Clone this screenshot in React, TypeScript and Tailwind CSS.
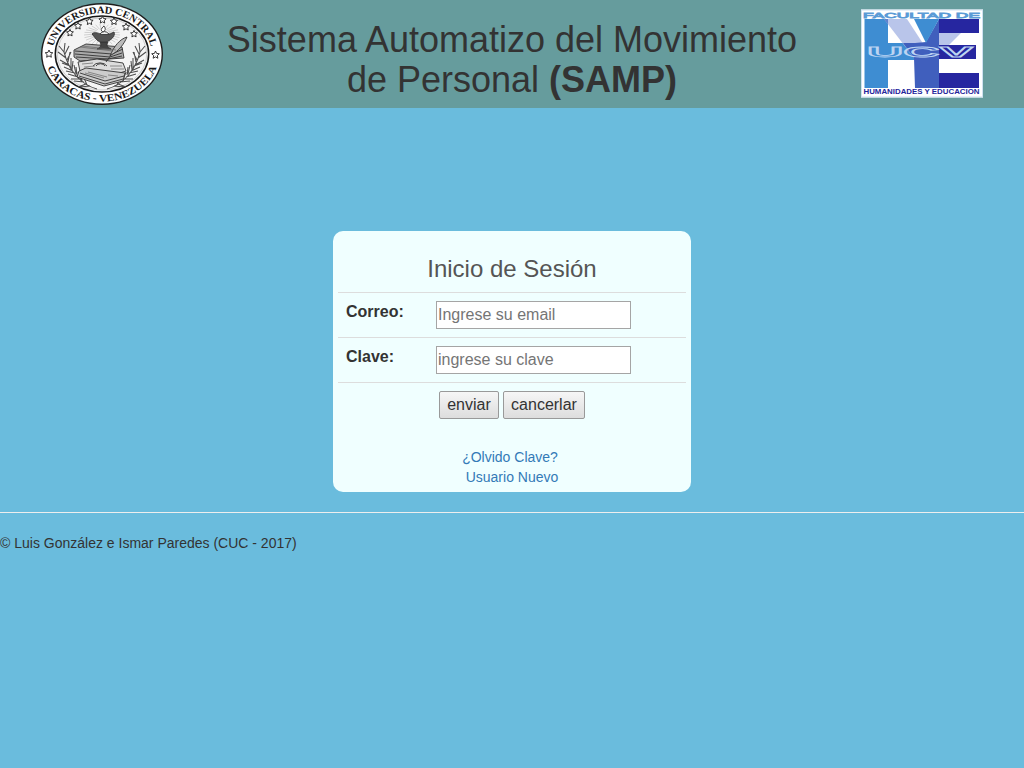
import React from "react";

const STARS = [
  [-53, 0, 4], [53.5, 1, 4], [-32, -21, 3.6], [-24, -28, 3.8], [-12.5, -32.5, 3.8],
  [0.5, -34, 3.8], [12, -32.5, 3.8], [24, -27, 3.8], [32, -20, 3.6],
];

function star(cx: number, cy: number, r: number) {
  return Array.from({ length: 10 }, (_, i) => {
    const a = (Math.PI * i) / 5 - Math.PI / 2;
    const q = i % 2 ? r * 0.48 : r;
    return `${(cx + q * Math.cos(a)).toFixed(2)},${(cy + q * Math.sin(a)).toFixed(2)}`;
  }).join(" ");
}

const BRANCH =
  "M-5 35C-20 31 -33 18 -38 -2M-12 32l-10 1M-15 31l-3-7M-18 28l-10-1M-21 26l-3-8M-24 23l-10-3M-26 20l-2-9M-29 17l-9-4M-31 14l0-10M-33 11l-9-5M-34 8l2-10M-36 4l-8-6M-37 0l4-8M-38-2l-5-6M-38-2l1-9M-16 30l-8 3M-22 25l-9 0M-27 19l-9-2M-32 12l-8-3M-20 27l-1-8M-25 21l-1-8M-30 16l1-9M-35 6l4-8";

function Seal() {
  return (
    <svg className="block h-[104px] w-[124px]" viewBox="-62 -52 124 104" role="img" aria-label="Universidad Central">
      <ellipse rx="61" ry="51" fill="#1c1c1c" />
      <ellipse rx="59.6" ry="49.6" fill="#fff" />
      <ellipse rx="46.7" ry="38" fill="#f4f4f4" stroke="#161616" strokeWidth="1.5" />
      <ellipse rx="44.7" ry="36" fill="none" stroke="#999" strokeWidth="0.4" />
      <defs>
        <path id="seal-top" d="M-49.5 0A49.5 40.8 0 0 1 49.5 0" />
        <path id="seal-bottom" d="M-57 0A57 47.6 0 0 0 57 0" />
      </defs>
      <g fill="#171717" fontFamily="'Liberation Serif', serif" fontWeight="700" fontSize="10.2" textAnchor="middle">
        <text><textPath href="#seal-top" startOffset="50%" textLength="127" lengthAdjust="spacingAndGlyphs">UNIVERSIDAD CENTRAL</textPath></text>
        <text><textPath href="#seal-bottom" startOffset="50%" textLength="137" lengthAdjust="spacingAndGlyphs">CARACAS - VENEZUELA</textPath></text>
      </g>
      <g fill="#fff" stroke="#222" strokeWidth="0.9">
        {STARS.map(([x, y, r]) => <polygon key={x} points={star(x, y, r)} />)}
      </g>
      <g stroke="#aaa" strokeWidth="0.5">
        {Array.from({ length: 26 }, (_, i) => {
          const a = (Math.PI * 2 * i) / 26;
          return <line key={i} x1={7 * Math.cos(a)} y1={-20 + 5 * Math.sin(a)} x2={18 * Math.cos(a)} y2={-19 + 11 * Math.sin(a)} />;
        })}
      </g>
      <g fill="none" stroke="#4d4d4d" strokeWidth="1.05">
        <path d={BRANCH} />
        <path d={BRANCH} transform="scale(-1 1)" />
      </g>
      <g stroke="#333" strokeWidth="0.9" strokeLinejoin="round">
        <path d="M-28-4L-16-10L20-7L22 4L-22 7L-28 3Z" fill="#aaa" />
        <path d="M-27-3L10 0L21-5M-27 0L8 3L20-1M-26 3L6 5L20 2" fill="none" />
        <path d="M-24 8L-5 5L21 9L24 17L8 22L-22 17Z" fill="#ddd" />
        <path d="M-23 17L-16 14L23 19L21 27L2 32L-25 23Z" fill="#ccc" />
        <path d="M-22 19L3 27L22 22M-23 22L3 30L21 25M-9 12a8 6 0 0 1 14 0M-6 12a5 4 0 0 1 9 0" fill="none" />
        <path d="M-5-5C0-7-1-10-2-12L6-12C4-9 5-7 9-5Z" fill="#444" />
        <path d="M-10-20C-7-23-3-20 0-20H8L12-22C14-18 8-13 4-12H-1C-6-13-7-17-10-20Z" fill="#555" />
        <path d="M-2-20Q2-25 7-20" fill="#eee" />
        <path d="M2-28Q-3-24 1-22Q5-24 2-28" fill="#fff" />
        <path d="M8 2C12-8 18-15 25-17C22-10 17-3 9 1L4 8" fill="#bbb" />
      </g>
      <path d="M-22-7L11-3M-20-8L14-4M-20 10L-9 9M-18 13L-7 12M8 12L20 12M9 15L22 15M-17 19L2 24M-14 18L5 23M6 21L16 22" fill="none" stroke="#666" strokeWidth="0.7" />
    </svg>
  );
}

function FacultyLogo() {
  return (
    <svg className="block h-[90px] w-[122px]" viewBox="861 9 122 90" role="img" aria-label="Facultad de Humanidades y Educación">
      <rect x="861" y="9.5" width="122" height="88" fill="#fff" />
      <rect x="861.5" y="10" width="121" height="87" fill="none" stroke="#cfe1f1" />
      <path d="M864.5 19H888V43H915V88H888V60H888V88H864.5Z" fill="#3e8dd2" />
      <path d="M888 60H915V88H888Z" fill="#fff" />
      <path d="M888 43H915V60H888Z" fill="#3e8dd2" />
      <path d="M884 19H907L922 42L914 58Z" fill="#b9c5ea" />
      <path d="M884 19H888V24.5Z" fill="#5c83ce" />
      <path d="M939 19H979V33H939ZM939 45H976V59H939ZM939 73H979V88H939Z" fill="#2626a0" />
      <path d="M939 33H961L949 45H939Z" fill="#b9c5ea" />
      <path d="M915 43L903 43L914 58L915 88H939V19L926 42Z" fill="#405fbd" />
      <path d="M914 19H939L926 43Z" fill="#3e8dd2" />
      <g fontFamily="'Liberation Sans', sans-serif">
        <text x="863" y="18.3" fontSize="8.1" textLength="117" lengthAdjust="spacingAndGlyphs" fill="#fff" stroke="#5b9bd6" strokeWidth="0.8">FACULTAD DE</text>
        <text x="867" y="56.5" fontSize="14" fontWeight="700" textLength="106" lengthAdjust="spacingAndGlyphs" fill="none" stroke="#bcd4f2" strokeWidth="0.8">UCV</text>
        <text x="863.5" y="94.3" fontSize="7.2" fontWeight="700" textLength="116" lengthAdjust="spacingAndGlyphs" fill="#24249b">HUMANIDADES Y EDUCACION</text>
      </g>
    </svg>
  );
}

function Field({ label, type, placeholder }: { label: string; type: string; placeholder: string }) {
  return (
    <div className="flex h-[45px] border-t border-[#ddd] p-2 text-base">
      <label className="w-[90px] leading-[22px] font-bold">{label}</label>
      <input
        type={type}
        placeholder={placeholder}
        className="h-7 w-[195px] border border-[#a5a5a5] bg-white px-px placeholder:text-[#757575]"
      />
    </div>
  );
}

const BUTTON = "h-7 rounded-[2px] border border-[#999] bg-linear-to-b from-[#f6f6f6] to-[#dddddd] text-base leading-[26px]";

export default function App() {
  return (
    <div className="min-h-screen bg-[#6abcdd] font-['Liberation_Sans',sans-serif] text-sm leading-5 text-[#333]">
      <header className="flex h-[108px] bg-[#669c9d]">
        <div className="w-[204px] pt-[2px] pl-10"><Seal /></div>
        <h1 className="flex-1 pt-5 text-center text-4xl leading-[39.6px]">
          Sistema Automatizo del Movimiento<br />de Personal <b>(SAMP)</b>
        </h1>
        <div className="w-[204px] pt-[9px] pl-[41px]"><FacultyLogo /></div>
      </header>
      <main className="pt-[123px]">
        <form className="mx-auto h-[261px] w-[358px] rounded-[10px] bg-[#f0ffff] px-[5px]" onSubmit={(e) => e.preventDefault()}>
          <h2 className="h-[61px] pt-6 text-center text-2xl leading-[27px] text-[#555]">Inicio de Sesión</h2>
          <Field label="Correo:" type="email" placeholder="Ingrese su email" />
          <Field label="Clave:" type="password" placeholder="ingrese su clave" />
          <div className="flex justify-center gap-1 border-t border-[#ddd] pt-2">
            <button type="submit" className={`${BUTTON} w-[60px]`}>enviar</button>
            <button type="reset" className={`${BUTTON} w-[82px]`}>cancerlar</button>
          </div>
          <nav className="flex flex-col items-center pt-7 text-[#337ab7]">
            <a href="#clave" className="pr-1">¿Olvido Clave?</a>
            <a href="#nuevo">Usuario Nuevo</a>
          </nav>
        </form>
      </main>
      <hr className="mt-5 border-[#eee]" />
      <footer className="pt-5">© Luis González e Ismar Paredes (CUC - 2017)</footer>
    </div>
  );
}
